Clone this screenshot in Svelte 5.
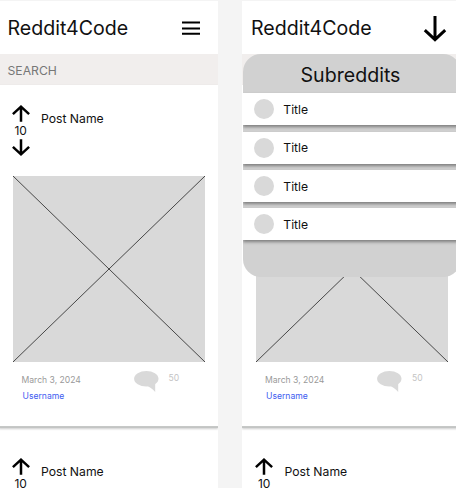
<script>
  const phones = [{ open: false }, { open: true }];
  const posts = [0, 1];
  const subreddits = ['Title', 'Title', 'Title', 'Title'];
</script>

{#snippet arrow(down)}
  <svg class="arrow" class:down width="20" height="18" viewBox="0 0 20 18">
    <path d="M10 16.8V2M1.9 9.2 10 1.7l8.1 7.5" />
  </svg>
{/snippet}

<main>
  {#each phones as phone}
    <section class="phone">
      <header>
        <h1>Reddit4Code</h1>
        {#if phone.open}
          <svg class="close" width="24" height="28" viewBox="0 0 24 28">
            <path d="M12 1v24M1.8 15.2 12 24.6l10.2-9.4" />
          </svg>
        {:else}
          <svg class="menu" width="18" height="14" viewBox="0 0 18 14">
            <path d="M0 1.5h18M0 7.5h18M0 12.7h18" />
          </svg>
        {/if}
      </header>
      <div class="search">SEARCH</div>

      {#each posts as post}
        <article>
          <div class="head">
            <div class="votes">
              {@render arrow(false)}
              <span>10</span>
              {@render arrow(true)}
            </div>
            <h2>Post Name</h2>
          </div>
          <svg class="image" width="192" height="186" viewBox="0 0 192 186">
            <rect width="192" height="186" />
            <path d="M0 0 192 186M192 0 0 186" />
          </svg>
          <footer>
            <div class="meta">
              <span class="date">March 3, 2024</span>
              <span class="user">Username</span>
            </div>
            <svg class="bubble" width="25" height="22" viewBox="0 0 25 22">
              <ellipse cx="12.3" cy="7.8" rx="12.2" ry="7.7" />
              <path d="M12 14.5 Q17 16 21.2 21V11Z" />
            </svg>
            <span class="count">50</span>
          </footer>
        </article>
      {/each}

      {#if phone.open}
        <aside>
          <h3>Subreddits</h3>
          <ul>
            {#each subreddits as title}
              <li><i></i>{title}</li>
            {/each}
          </ul>
        </aside>
      {/if}
    </section>
  {/each}
</main>

<style>
  :global(body) {
    background: #f4f4f4;
    overflow: hidden;
  }
  main {
    display: flex;
    gap: 24.5px;
    width: 456px;
    height: 488px;
    box-sizing: border-box;
    padding-top: 1px;
    overflow: hidden;
    font-family: Inter, 'Liberation Sans', sans-serif;
    color: #111;
  }
  .phone {
    position: relative;
    flex: none;
    width: 219px;
    height: 487px;
    background: #fff;
    overflow: hidden;
  }
  .phone:first-child {
    margin-left: -1.5px;
  }
  h1, h2, h3, ul {
    margin: 0;
    padding: 0;
    font-weight: 400;
  }
  header {
    display: flex;
    align-items: center;
    justify-content: space-between;
    height: 53px;
    box-sizing: border-box;
    padding: 0 14px 0 9px;
  }
  h1, h3 {
    font-size: 19.6px;
    line-height: 24px;
  }
  svg {
    display: block;
    flex: none;
  }
  .menu, .arrow, .close {
    fill: none;
    stroke: #000;
  }
  .menu {
    stroke-width: 2;
    margin-right: 4px;
  }
  .close {
    stroke-width: 3;
    margin-top: 2px;
  }
  .search {
    height: 31px;
    line-height: 34px;
    padding-left: 9px;
    background: #f1eeed;
    color: #777;
    font-size: 12.2px;
  }
  article {
    height: 353.7px;
    box-sizing: border-box;
    padding: 30px 14px 0;
    border-bottom: 2px solid #c6c8c7;
    box-shadow: 0 1px 2px #0003;
  }
  .search + article {
    height: 343px;
    padding-top: 19.5px;
  }
  .head {
    display: flex;
    height: 71.5px;
  }
  .votes {
    display: flex;
    flex-direction: column;
    align-items: center;
    width: 20px;
    margin-left: -1.8px;
    font-size: 12px;
    line-height: 15px;
  }
  .arrow {
    stroke-width: 2.5;
  }
  .down {
    transform: rotate(180deg);
  }
  h2 {
    margin: 6px 0 0 10.3px;
    font-size: 12.2px;
    line-height: 16px;
  }
  .image {
    fill: #d9d9d9;
  }
  .image path {
    fill: none;
    stroke: #222;
    stroke-width: 0.8;
  }
  footer {
    display: flex;
    padding: 9px 0 0 9px;
  }
  .meta {
    display: flex;
    flex-direction: column;
    width: 112px;
    padding-top: 3px;
    font-size: 8.6px;
    line-height: 12px;
  }
  .date {
    color: #999;
  }
  .user {
    margin: 4px 0 0 1px;
    color: #3e5cf0;
  }
  .count {
    margin: 1px 0 0 10px;
    font-size: 8.6px;
    line-height: 12px;
    color: #c4c4c4;
  }
  .bubble {
    fill: #d9d9d9;
  }
  aside {
    position: absolute;
    top: 53px;
    left: 0.5px;
    width: 218px;
    height: 222.5px;
    border-radius: 18px;
    background: #d1d1d1;
    overflow: hidden;
  }
  h3 {
    height: 39.3px;
    line-height: 42px;
    text-align: center;
    text-indent: -2px;
  }
  ul {
    display: flex;
    flex-direction: column;
    gap: 6.4px;
    list-style: none;
  }
  li {
    display: flex;
    align-items: center;
    gap: 9.8px;
    height: 32px;
    padding-left: 11px;
    background: #fff;
    box-shadow: 0 2px 3px #0006;
    font-size: 12.2px;
  }
  i {
    width: 20px;
    height: 20px;
    border-radius: 50%;
    background: #d9d9d9;
  }
</style>
